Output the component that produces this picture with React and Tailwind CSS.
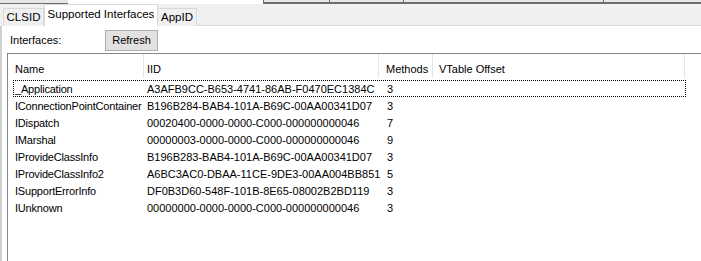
import React from 'react'

const ROWS = [
  { name: '_Application', iid: 'A3AFB9CC-B653-4741-86AB-F0470EC1384C', methods: '3', focus: true },
  { name: 'IConnectionPointContainer', iid: 'B196B284-BAB4-101A-B69C-00AA00341D07', methods: '3' },
  { name: 'IDispatch', iid: '00020400-0000-0000-C000-000000000046', methods: '7' },
  { name: 'IMarshal', iid: '00000003-0000-0000-C000-000000000046', methods: '9' },
  { name: 'IProvideClassInfo', iid: 'B196B283-BAB4-101A-B69C-00AA00341D07', methods: '3' },
  { name: 'IProvideClassInfo2', iid: 'A6BC3AC0-DBAA-11CE-9DE3-00AA004BB851', methods: '5' },
  { name: 'ISupportErrorInfo', iid: 'DF0B3D60-548F-101B-8E65-08002B2BD119', methods: '3' },
  { name: 'IUnknown', iid: '00000000-0000-0000-C000-000000000046', methods: '3' },
]

function TopStrip() {
  return (
    <div className="flex h-[4px] shrink-0">
      <div className="w-[68px] bg-[#e6e6e6] border-b border-[#6e6e6e]" />
      <div className="w-[195px] bg-white" />
      <div className="w-[66px] bg-[#e6e6e6] border-b-2 border-l border-[#6e6e6e]" />
      <div className="w-[74px] bg-[#e6e6e6] border-b-2 border-l border-[#6e6e6e]" />
      <div className="w-[200px] bg-[#e6e6e6] border-b-2 border-l border-[#6e6e6e]" />
      <div className="flex-1 bg-[#e6e6e6] border-b-2 border-l border-[#6e6e6e]" />
    </div>
  )
}

function Tabs() {
  return (
    <div className="flex items-end h-[22px] bg-[#f0f0f0] pl-[3px] shrink-0">
      <div className="h-[18px] w-[41px] bg-[#f0f0f0] border border-b-0 border-[#d9d9d9] flex items-center justify-center text-[11.5px] text-black">
        CLSID
      </div>
      <div className="h-[22px] w-[114px] bg-white border border-b-0 border-[#d9d9d9] flex items-center justify-center pb-[2px] text-[11.5px] text-black">
        Supported Interfaces
      </div>
      <div className="h-[18px] w-[39px] bg-[#f0f0f0] border border-b-0 border-l-0 border-[#d9d9d9] flex items-center justify-center text-[11.5px] text-black">
        AppID
      </div>
      <div className="flex-1 border-b border-[#d9d9d9]" />
    </div>
  )
}

function ListView() {
  return (
    <div className="ml-[5px] mt-[2px] flex-1 border-l border-t border-[#828790] bg-white">
      {/* header */}
      <div className="grid grid-cols-[136px_235px_54px_1fr] h-[26px] text-[11px] text-black">
        <div className="pl-[7px] pt-[7px] border-r border-[#e5e5e5] mb-[2px]">Name</div>
        <div className="pl-[3px] pt-[7px] border-r border-[#e5e5e5] mb-[2px]">IID</div>
        <div className="pl-[7px] pt-[7px] border-r border-[#e5e5e5] mb-[2px]">Methods</div>
        <div className="flex mb-[2px]">
          <div className="w-[252px] pl-[6px] pt-[7px] border-r border-[#e5e5e5]">VTable Offset</div>
        </div>
      </div>
      {/* rows */}
      <div className="pl-[5px]">
        {ROWS.map(r => (
          <div
            key={r.name}
            className={`w-[673px] h-[17px] grid grid-cols-[133px_240px_1fr] items-center text-[11px] text-black border border-dotted ${
              r.focus ? 'border-black' : 'border-transparent'
            }`}
          >
            <span className="pl-[1px] whitespace-nowrap tracking-[-0.2px]">{r.name}</span>
            <span className="whitespace-nowrap">{r.iid}</span>
            <span>{r.methods}</span>
          </div>
        ))}
      </div>
    </div>
  )
}

export default function App() {
  return (
    <div
      className="w-[701px] h-[261px] overflow-hidden flex flex-col bg-white"
      style={{ fontFamily: '"Liberation Sans", Arial, sans-serif' }}
    >
      <TopStrip />
      <Tabs />
      <div className="flex-1 flex border-l-2 border-[#d0d0d0] min-h-0">
        <div className="flex-1 flex flex-col">
          <div className="flex items-center pt-[4px] h-[25px]">
            <span className="ml-[8px] w-[95px] text-[11px] text-black">Interfaces:</span>
            <button className="w-[53px] h-[21px] bg-[#e1e1e1] border border-[#adadad] text-[11px] text-black flex items-center justify-center">
              Refresh
            </button>
          </div>
          <ListView />
        </div>
      </div>
    </div>
  )
}
